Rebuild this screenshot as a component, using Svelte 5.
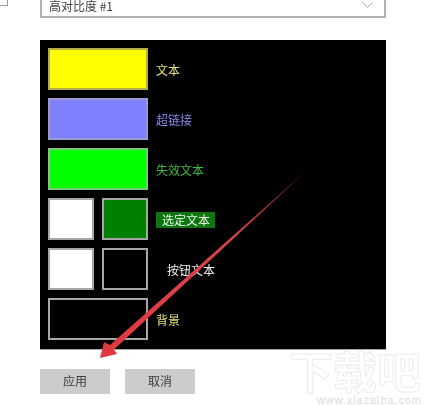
<script>
  const rows = [
    { swatches: ["yellow wide"], label: "文本", kind: "text" },
    { swatches: ["blue wide"], label: "超链接", kind: "link" },
    { swatches: ["lime wide"], label: "失效文本", kind: "disabled" },
    { swatches: ["white", "green"], label: "选定文本", kind: "selected" },
    { swatches: ["white", "black"], label: "按钮文本", kind: "button" },
    { swatches: ["black wide"], label: "背景", kind: "text" }
  ];
</script>

<div class="page">
  <span class="checkbox"></span>

  <div class="select">
    <span>高对比度 #1</span>
    <svg width="11" height="6" viewBox="0 0 11 6" fill="none" stroke="#a4a4a4" stroke-width="1">
      <path d="M0.5 0.5 5.5 5.2 10.5 0.5" />
    </svg>
  </div>

  <div class="panel">
    {#each rows as row}
      <div class="row">
        {#each row.swatches as swatch}
          <div class="swatch {swatch}"></div>
        {/each}
        <span class="label {row.kind}">{row.label}</span>
      </div>
    {/each}
  </div>

  <div class="actions">
    <button>应用</button>
    <button>取消</button>
  </div>

  <svg class="arrow" width="425" height="405" viewBox="0 0 425 405">
    <defs>
      <linearGradient id="shaft" gradientUnits="userSpaceOnUse" x1="315" y1="163" x2="100" y2="358">
        <stop offset="0" stop-color="#d8404a" stop-opacity="0.08" />
        <stop offset="0.2" stop-color="#d8404a" stop-opacity="0.7" />
        <stop offset="0.4" stop-color="#d8434c" />
        <stop offset="1" stop-color="#e0383f" />
      </linearGradient>
    </defs>
    <path fill="url(#shaft)" d="M315 163 114 349.5 117 354 100 358 104 342 110 345Z" />
  </svg>

  <div class="watermark">
    <span class="mark">下载吧</span>
    <span class="site">www.xiazaiba.com</span>
  </div>
</div>

<style>
  :global(body) {
    margin: 0;
    background: #fff;
  }

  .page {
    position: relative;
    width: 425px;
    height: 405px;
    overflow: hidden;
    padding-left: 40px;
    box-sizing: border-box;
    font-family: "Noto Sans CJK SC", "Noto Sans", sans-serif;
    font-size: 12px;
    filter: blur(0.45px);
  }

  .checkbox {
    position: absolute;
    left: -10px;
    top: -12px;
    width: 16px;
    height: 16px;
    border: 1px solid #9a9a9a;
  }

  .select {
    box-sizing: border-box;
    width: 346px;
    height: 28px;
    margin-top: -10px;
    border: 2px solid #b0b0b0;
    padding: 2px 6px 0 7px;
    display: flex;
    align-items: center;
    justify-content: space-between;
    color: #444;
  }

  .select svg {
    margin-right: 5px;
  }

  .panel {
    box-sizing: border-box;
    width: 346px;
    height: 310px;
    margin-top: 22px;
    padding: 8px;
    background: #000;
    border-bottom: 1px solid #aaa;
    display: flex;
    flex-direction: column;
    gap: 8px;
  }

  .row {
    display: flex;
    align-items: center;
    gap: 8px;
    height: 42px;
  }

  .swatch {
    box-sizing: border-box;
    width: 46px;
    height: 42px;
    border: 2px solid #a6a6a6;
  }

  .swatch.wide {
    width: 100px;
  }

  .yellow {
    background: #ff0;
    border-color: #b4ad4a;
  }

  .blue {
    background: #8080ff;
    border-color: #9a9ad0;
  }

  .lime {
    background: #0f0;
    border-color: #7cc87c;
  }

  .white {
    background: #fff;
  }

  .green {
    background: #008000;
  }

  .black {
    background: #000;
  }

  .label {
    line-height: 16px;
    margin-top: 2px;
  }

  .label.text {
    color: #e6e27a;
  }

  .label.link {
    color: #8888ee;
  }

  .label.disabled {
    color: #3fb83f;
  }

  .label.selected {
    color: #e8f4e8;
    background: #0e760e;
    padding: 0 5px 0 6px;
  }

  .label.button {
    color: #f2f2f2;
    margin-left: 11px;
  }

  .actions {
    display: flex;
    gap: 15px;
    margin-top: 19px;
  }

  button {
    width: 70px;
    height: 25px;
    padding: 0 0 2px;
    border: none;
    background: #cccccc;
    color: #3a3a3a;
    font: inherit;
  }

  .arrow {
    position: absolute;
    left: 0;
    top: 0;
  }

  .watermark {
    position: absolute;
    left: 289px;
    top: 346px;
    width: 136px;
    display: flex;
    flex-direction: column;
    gap: 1px;
  }

  .mark {
    font-size: 44px;
    line-height: 49px;
    font-weight: 700;
    color: #fff;
    -webkit-text-stroke: 1px #ececec;
    white-space: nowrap;
  }

  .site {
    margin-left: 28px;
    font-family: "Liberation Sans", sans-serif;
    font-size: 11px;
    line-height: 9px;
    letter-spacing: 0.9px;
    color: #fff;
    -webkit-text-stroke: 0.4px #d8d8d8;
    white-space: nowrap;
  }
</style>
